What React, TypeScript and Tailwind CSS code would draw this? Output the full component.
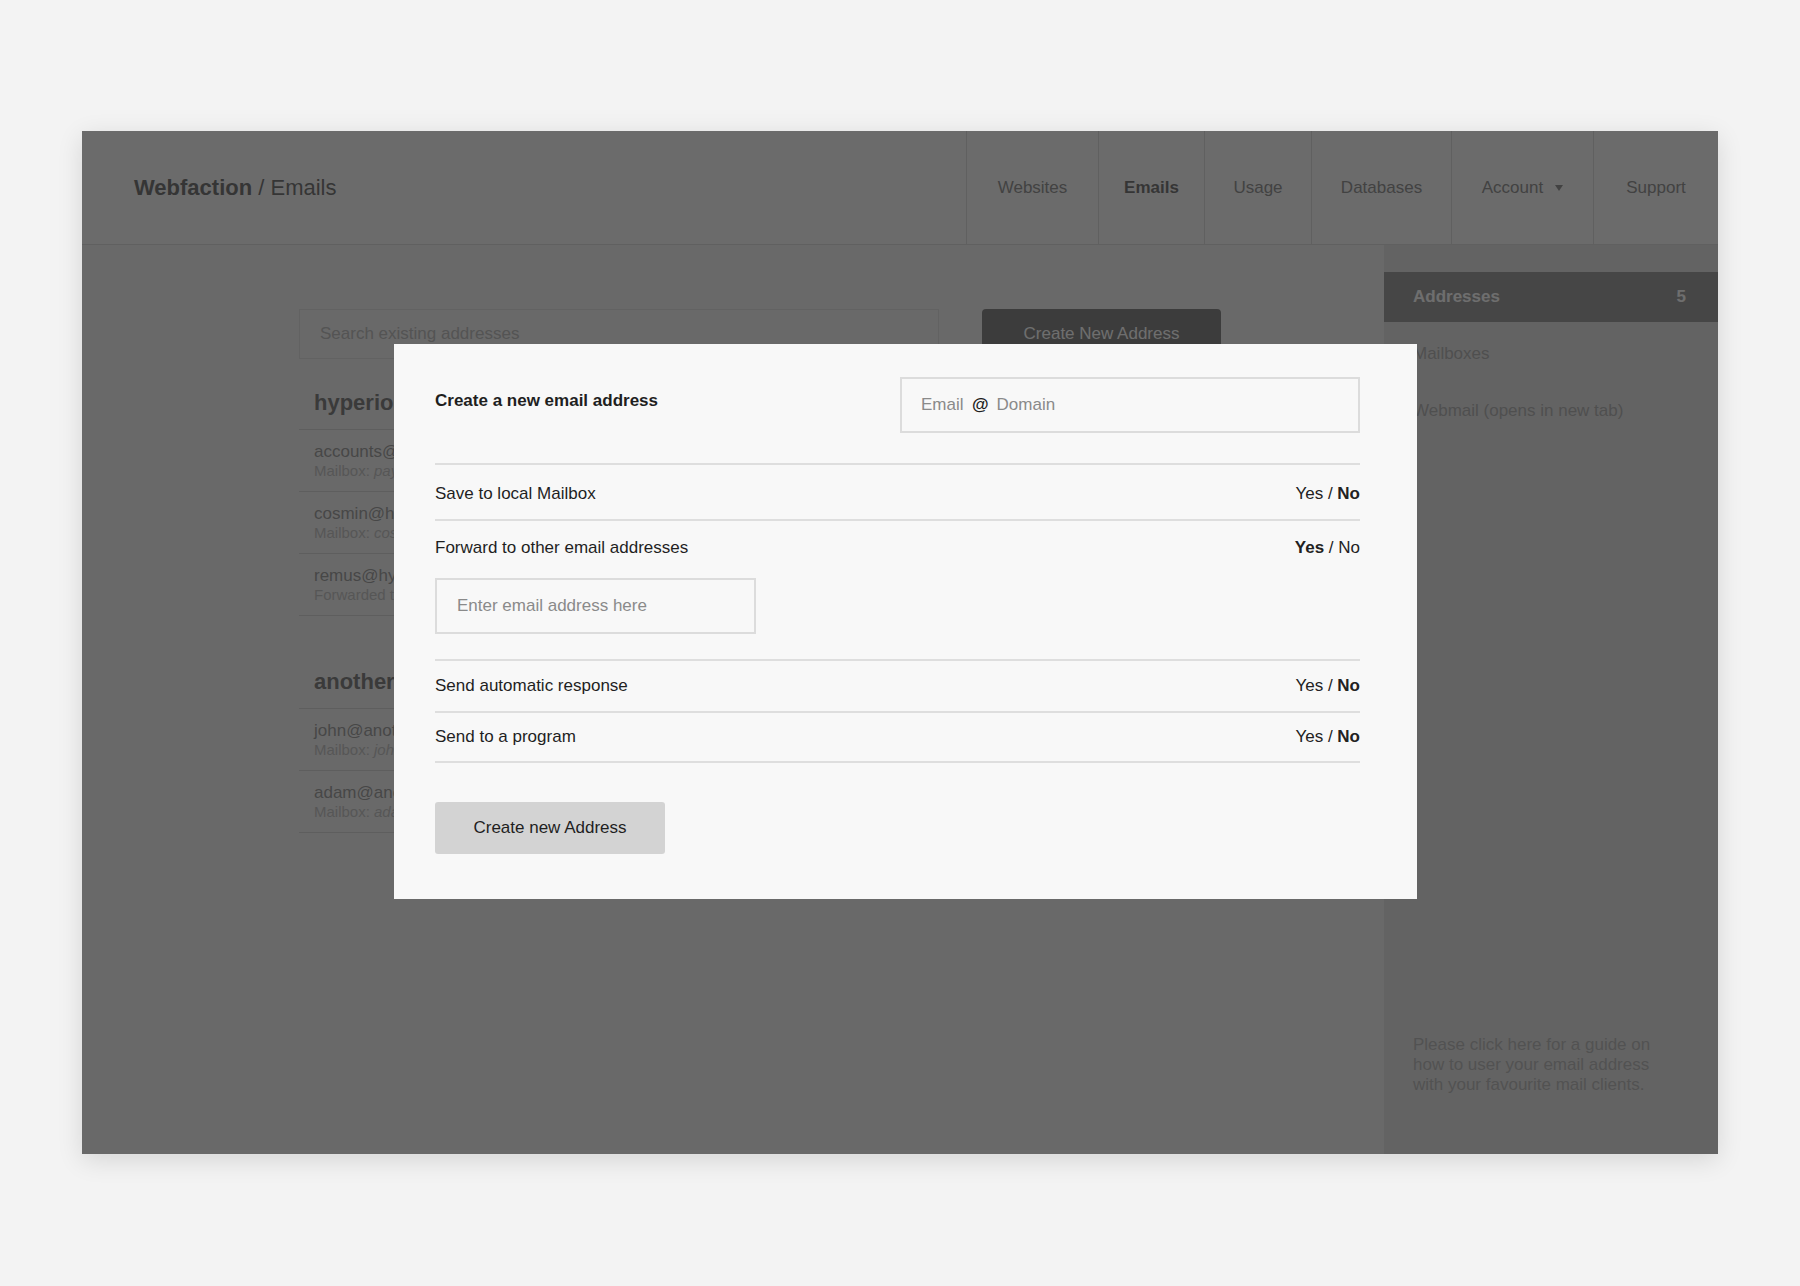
import { useState } from "react"

type Choice = "yes" | "no"

const navItems = [
  { label: "Websites", width: "w-[132px]" },
  { label: "Emails", width: "w-[106px]", active: true },
  { label: "Usage", width: "w-[107px]" },
  { label: "Databases", width: "w-[140px]" },
  { label: "Account", width: "w-[142px]", menu: true },
  { label: "Support", width: "w-[125px]" },
]

const domains = [
  {
    name: "hyperion.ro",
    addresses: [
      { email: "accounts@hyperion.ro", kind: "Mailbox:", target: "payments" },
      { email: "cosmin@hyperion.ro", kind: "Mailbox:", target: "cosmin" },
      { email: "remus@hyperion.ro", kind: "Forwarded to", target: "remus@gmail.com" },
    ],
  },
  {
    name: "anotherdomain.com",
    addresses: [
      { email: "john@anotherdomain.com", kind: "Mailbox:", target: "john" },
      { email: "adam@anotherdomain.com", kind: "Mailbox:", target: "adam" },
    ],
  },
]

function Header() {
  return (
    <header className="flex h-[114px] items-stretch justify-between border-b border-[#cccccc] bg-[#f3f3f3]">
      <div className="flex items-center pl-[52px] text-[22px] text-[#333333]">
        <span className="font-bold">Webfaction</span>
        <span>&nbsp;/ Emails</span>
      </div>
      <nav className="flex">
        {navItems.map((item) => (
          <a
            key={item.label}
            href="#"
            className={`flex ${item.width} items-center justify-center gap-[12px] border-l border-[#cccccc] text-[17px] ${
              item.active ? "font-bold text-[#333333]" : "text-[#606060]"
            }`}
          >
            {item.label}
            {item.menu && (
              <svg width="8" height="6" viewBox="0 0 8 6" className="mt-[1px]">
                <path d="M0 0h8L4 6z" fill="#606060" />
              </svg>
            )}
          </a>
        ))}
      </nav>
    </header>
  )
}

function AddressList() {
  return (
    <div className="w-[640px]">
      {domains.map((domain, i) => (
        <section key={domain.name} className={i > 0 ? "mt-[22px]" : ""}>
          <h3 className="border-b border-[#c5c5c5] px-[15px] pt-[30px] pb-[12px] text-[22px] font-bold leading-[28px] text-[#454545]">
            {domain.name}
          </h3>
          {domain.addresses.map((a) => (
            <div key={a.email} className="border-b border-[#c5c5c5] px-[15px] pt-[12px] pb-[11px]">
              <div className="text-[17px] leading-5 text-[#737373]">{a.email}</div>
              <div className="text-[15px] leading-[18px] text-[#aaaaaa]">
                {a.kind} <em>{a.target}</em>
              </div>
            </div>
          ))}
        </section>
      ))}
    </div>
  )
}

function Sidebar() {
  return (
    <aside className="flex w-[334px] flex-col bg-[#d7d7d7] pt-[27px] pb-[59px]">
      <div className="flex flex-col gap-[7px]">
        <a href="#" className="flex h-[50px] items-center justify-between bg-[#6f6f6f] px-[29px] text-[17px] font-bold text-white">
          <span>Addresses</span>
          <span className="pr-[3px]">5</span>
        </a>
        <a href="#" className="flex h-[50px] items-center px-[29px] text-[17px] text-[#909090]">
          Mailboxes
        </a>
        <a href="#" className="flex h-[50px] items-center px-[29px] text-[17px] text-[#909090]">
          Webmail (opens in new tab)
        </a>
      </div>
      <p className="mt-auto max-w-[304px] px-[29px] text-[17px] leading-5 text-[#9a9a9a]">
        Please click here for a guide on how to user your email address with your favourite mail clients.
      </p>
    </aside>
  )
}

function YesNo({ value }: { value: Choice }) {
  return (
    <span className="text-[17px] leading-5 text-[#222222]">
      <span className={value === "yes" ? "font-bold" : ""}>Yes</span>
      {" / "}
      <span className={value === "no" ? "font-bold" : ""}>No</span>
    </span>
  )
}

function NewAddressModal() {
  const [mailbox] = useState<Choice>("no")
  const [forward] = useState<Choice>("yes")
  const [autoresponse] = useState<Choice>("no")
  const [program] = useState<Choice>("no")

  return (
    <div className="absolute left-[312px] top-[213px] w-[1023px] bg-[#f8f8f8] pt-[33px] pr-[57px] pb-[45px] pl-[41px] text-[#1f1f1f]">
      <div className="flex items-start justify-between border-b-2 border-[#dedede] pb-[30px]">
        <h2 className="mt-[14px] text-[17px] font-bold leading-5">Create a new email address</h2>
        <div className="flex h-[56px] w-[460px] items-center gap-[8px] border-2 border-[#dcdcdc] px-[19px] text-[17px]">
          <input
            placeholder="Email"
            className="w-[43px] bg-transparent outline-none placeholder:text-[#8a8a8a]"
          />
          <span className="font-bold">@</span>
          <input
            placeholder="Domain"
            className="flex-1 bg-transparent outline-none placeholder:text-[#8a8a8a]"
          />
        </div>
      </div>

      <div className="flex items-center justify-between border-b-2 border-[#dedede] pt-[19px] pb-[15px] text-[17px] leading-5">
        <span>Save to local Mailbox</span>
        <YesNo value={mailbox} />
      </div>

      <div className="border-b-2 border-[#dedede] pt-[17px] pb-[25px]">
        <div className="flex items-center justify-between text-[17px] leading-5">
          <span>Forward to other email addresses</span>
          <YesNo value={forward} />
        </div>
        <input
          placeholder="Enter email address here"
          className="mt-[20px] h-[56px] w-[321px] border-2 border-[#dcdcdc] bg-transparent px-[20px] text-[17px] outline-none placeholder:text-[#8a8a8a]"
        />
      </div>

      <div className="flex items-center justify-between border-b-2 border-[#dedede] py-[15px] text-[17px] leading-5">
        <span>Send automatic response</span>
        <YesNo value={autoresponse} />
      </div>

      <div className="flex items-center justify-between border-b-2 border-[#dedede] py-[14px] text-[17px] leading-5">
        <span>Send to a program</span>
        <YesNo value={program} />
      </div>

      <button className="mt-[39px] h-[52px] w-[230px] rounded-[3px] bg-[#d3d3d3] text-[17px] text-[#1f1f1f]">
        Create new Address
      </button>
    </div>
  )
}

export default function App() {
  return (
    <div className="min-h-screen bg-[#f3f3f3] pt-[131px] pb-[132px] font-['Liberation_Sans',Arial,sans-serif]">
      <div className="relative mx-auto flex h-[1023px] w-[1636px] flex-col bg-[#ececec] shadow-[0_6px_24px_rgba(0,0,0,0.12)]">
        <Header />
        <div className="flex flex-1">
          <main className="flex-1 pt-[64px] pl-[217px]">
            <div className="flex items-start gap-[43px]">
              <input
                placeholder="Search existing addresses"
                className="h-[50px] w-[640px] border border-[#d3d3d3] bg-transparent px-[20px] text-[17px] outline-none placeholder:text-[#a0a0a0]"
              />
              <button className="h-[50px] w-[239px] rounded-[4px] bg-[#4c4c4c] text-[17px] text-white">
                Create New Address
              </button>
            </div>
            <AddressList />
          </main>
          <Sidebar />
        </div>

        {/* dim layer behind the dialog */}
        <div className="absolute inset-0 bg-[rgba(54,54,54,0.72)]" />
        <NewAddressModal />
      </div>
    </div>
  )
}
